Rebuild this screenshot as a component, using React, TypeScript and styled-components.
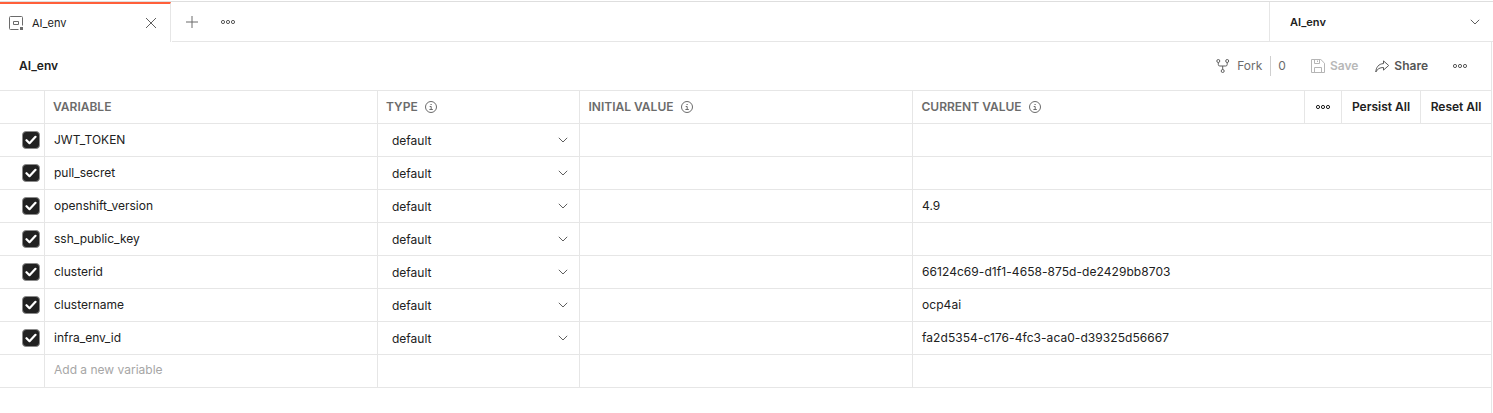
import React from "react";
import styled, { createGlobalStyle } from "styled-components";

const LINE = "#e6e6e6";

const GlobalStyle = createGlobalStyle`
  * { box-sizing: border-box; }
  body {
    margin: 0;
    background: #fff;
    color: #212121;
    font-family: Inter, "Liberation Sans", sans-serif;
    font-size: 12px;
    line-height: 16px;
  }
  svg { display: block; flex: none; }
`;

const Page = styled.div`
  display: flex;
  flex-direction: column;
  height: 413px;
  padding-top: 1px;
  overflow: hidden;
`;

const TabBar = styled.header`
  display: flex;
  flex: none;
  height: 41px;
  border-top: 1px solid #dedede;
`;

const ActiveTab = styled.div`
  display: flex;
  align-items: center;
  width: 171px;
  padding: 0 13px 0 9px;
  border-top: 2px solid #ff5f3a;
  border-right: 1px solid ${LINE};
`;

const TabName = styled.span`
  flex: 1;
  margin-left: 9px;
  font-size: 11px;
  color: #212121;
`;

const TabActions = styled.div`
  display: flex;
  flex: 1;
  align-items: center;
  gap: 22px;
  margin-left: 1px;
  padding-left: 13px;
  border-bottom: 1px solid ${LINE};
`;

const EnvironmentPicker = styled.div`
  display: flex;
  align-items: center;
  justify-content: space-between;
  width: 224px;
  padding: 1px 13px 0 20px;
  border-left: 1px solid ${LINE};
  border-bottom: 1px solid ${LINE};
  font-size: 11px;
  font-weight: 600;
`;

const Editor = styled.main`
  flex: 1;
  width: 1492px;
  border-right: 1px solid ${LINE};
`;

const Toolbar = styled.div`
  display: flex;
  align-items: center;
  height: 48px;
  padding: 0 23px 0 19px;
`;

const Title = styled.h1`
  flex: 1;
  margin: 0;
  font-size: 12px;
  font-weight: 600;
`;

const ToolButton = styled.div<{ $tone?: string; $weight?: number; $gap?: number; $after?: number }>`
  display: flex;
  align-items: center;
  gap: ${(p) => p.$gap ?? 5}px;
  margin-right: ${(p) => p.$after ?? 0}px;
  color: ${(p) => p.$tone ?? "#6b6b6b"};
  font-weight: ${(p) => p.$weight ?? 400};
`;

const ForkCount = styled.span`
  height: 20px;
  margin-right: 25px;
  padding-left: 7px;
  border-left: 1px solid #cfcfcf;
  line-height: 20px;
  color: #6b6b6b;
`;

const Row = styled.div<{ $head?: boolean }>`
  display: grid;
  grid-template-columns: 45px 333px 202px 333px 1fr;
  height: ${(p) => (p.$head ? 34 : 33)}px;
  border-top: ${(p) => (p.$head ? `1px solid ${LINE}` : "none")};
  border-bottom: 1px solid ${LINE};
`;

const Cell = styled.div<{ $inset?: number }>`
  display: flex;
  align-items: center;
  padding-left: ${(p) => p.$inset ?? 9}px;
  border-right: 1px solid ${LINE};
  white-space: nowrap;
  &:last-child { border-right: none; }
`;

const HeadCell = styled(Cell)<{ $gap?: number }>`
  gap: ${(p) => p.$gap ?? 8}px;
  color: #6b6b6b;
  font-weight: 600;
`;

const TypeCell = styled(Cell)`
  justify-content: space-between;
  padding: 2px 11px 0 14px;
`;

const ChevronSlot = styled.span`
  margin-top: -2px;
`;

const HeadActions = styled.div`
  display: flex;
  align-self: stretch;
  margin-left: auto;
`;

const HeadAction = styled.div<{ $width: number }>`
  display: flex;
  align-items: center;
  justify-content: center;
  width: ${(p) => p.$width}px;
  border-left: 1px solid ${LINE};
  color: #212121;
`;

const Checkbox = styled.span`
  display: flex;
  width: 18px;
  height: 18px;
  align-items: center;
  justify-content: center;
  border: 1px solid #8a8a8a;
  border-radius: 4px;
  background: #212121;
`;

const Value = styled.span<{ $spacing?: number }>`
  letter-spacing: ${(p) => p.$spacing ?? 0}px;
`;

const Placeholder = styled.span`
  margin-top: -2px;
  color: #a6a6a6;
`;

const Dots = ({ color = "#5a5a5a" }: { color?: string }) => (
  <svg width="16" height="6" viewBox="0 0 16 6" fill="none" stroke={color}>
    <circle cx="3" cy="3" r="1.6" />
    <circle cx="8" cy="3" r="1.6" />
    <circle cx="13" cy="3" r="1.6" />
  </svg>
);

const Chevron = () => (
  <svg width="10" height="6" viewBox="0 0 10 6" fill="none" stroke="#5f5f5f">
    <path d="M.8.8 5 5 9.2.8" />
  </svg>
);

const Info = () => (
  <svg width="12" height="12" viewBox="0 0 12 12" fill="none" stroke="#6b6b6b">
    <circle cx="6" cy="6" r="5.5" />
    <path d="M4.7 5.5H6.2V8.5M4.4 8.5H7.8" />
    <path d="M5.5 3.5h1.2" strokeWidth="1.2" />
  </svg>
);

const EnvironmentIcon = () => (
  <svg width="14" height="14" viewBox="0 0 14 14" fill="none" stroke="#6b6b6b">
    <path d="M9.5 13.5H1.5a1 1 0 0 1-1-1v-11a1 1 0 0 1 1-1h11a1 1 0 0 1 1 1v8" />
    <path d="M4.5 5.5h5v3h-5z" />
    <path d="M11 11h3v3h-3z" fill="#6b6b6b" stroke="none" />
  </svg>
);

const CloseIcon = () => (
  <svg width="12" height="12" viewBox="0 0 12 12" stroke="#5f5f5f">
    <path d="m1 1 10 10M11 1 1 11" />
  </svg>
);

const PlusIcon = () => (
  <svg width="13" height="12" viewBox="0 0 13 12" stroke="#6b6b6b">
    <path d="M1 6h12M7 0v12" />
  </svg>
);

const ForkIcon = () => (
  <svg width="14" height="14" viewBox="0 0 14 14" fill="none" stroke="#5f5f5f">
    <circle cx="2.3" cy="2" r="1.5" />
    <circle cx="11.2" cy="2" r="1.5" />
    <circle cx="6.7" cy="12" r="1.5" />
    <path d="M2.3 3.5v2A1.5 1.5 0 0 0 3.8 7h5.9a1.5 1.5 0 0 0 1.5-1.5v-2M6.7 7v3.500" />
  </svg>
);

const SaveIcon = () => (
  <svg width="14" height="14" viewBox="0 0 14 14" fill="none" stroke="#b5b5b5">
    <path d="M.5.5h9.300l3.700 3.700v9.300H.5zM3.500.5v4h5v-4M3.500 13.500v-5h7v5M6.500 1.500v1.500" />
  </svg>
);

const ShareIcon = () => (
  <svg width="15" height="13" viewBox="0 0 15 13" fill="none" stroke="#5a5a5a" strokeLinejoin="round">
    <path d="M8.5.9 13.700 5.500l-5.200 4.600V7.500C4.800 7.500 2.500 8.800.8 12 1 7.500 3.600 3.800 8.500 3.600z" />
  </svg>
);

const CheckIcon = () => (
  <svg width="12" height="10" viewBox="0 0 12 10" fill="none" stroke="#fff" strokeWidth="2.200" strokeLinecap="round" strokeLinejoin="round">
    <path d="m1.500 5.200 3 3L10.500 1.800" />
  </svg>
);

const variables = [
  { name: "JWT_TOKEN", value: "" },
  { name: "pull_secret", value: "" },
  { name: "openshift_version", value: "4.9" },
  { name: "ssh_public_key", value: "" },
  { name: "clusterid", value: "66124c69-d1f1-4658-875d-de2429bb8703" },
  { name: "clustername", value: "ocp4ai" },
  { name: "infra_env_id", value: "fa2d5354-c176-4fc3-aca0-d39325d56667" },
];

export default function App() {
  return (
    <>
      <GlobalStyle />
      <Page>
        <TabBar>
          <ActiveTab>
            <EnvironmentIcon />
            <TabName>AI_env</TabName>
            <CloseIcon />
          </ActiveTab>
          <TabActions>
            <PlusIcon />
            <Dots />
          </TabActions>
          <EnvironmentPicker>
            AI_env
            <Chevron />
          </EnvironmentPicker>
        </TabBar>
        <Editor>
          <Toolbar>
            <Title>AI_env</Title>
            <ToolButton $gap={7} $after={8}>
              <ForkIcon />
              Fork
            </ToolButton>
            <ForkCount>0</ForkCount>
            <ToolButton $tone="#b8b8b8" $weight={600} $after={17}>
              <SaveIcon />
              Save
            </ToolButton>
            <ToolButton $tone="#555" $weight={600} $gap={4} $after={24}>
              <ShareIcon />
              Share
            </ToolButton>
            <Dots />
          </Toolbar>
          <Row $head>
            <HeadCell />
            <HeadCell $inset={8}>VARIABLE</HeadCell>
            <HeadCell $inset={8} $gap={7}>
              TYPE <Info />
            </HeadCell>
            <HeadCell $inset={8.5}>
              INITIAL VALUE <Info />
            </HeadCell>
            <HeadCell $inset={8.5} $gap={7}>
              CURRENT VALUE <Info />
              <HeadActions>
                <HeadAction $width={37}>
                  <Dots color="#212121" />
                </HeadAction>
                <HeadAction $width={79}>Persist All</HeadAction>
                <HeadAction $width={71}>Reset All</HeadAction>
              </HeadActions>
            </HeadCell>
          </Row>
          {variables.map((v) => (
            <Row key={v.name}>
              <Cell $inset={22}>
                <Checkbox>
                  <CheckIcon />
                </Checkbox>
              </Cell>
              <Cell>
                <Value>{v.name}</Value>
              </Cell>
              <TypeCell>
                <Value>default</Value>
                <ChevronSlot>
                  <Chevron />
                </ChevronSlot>
              </TypeCell>
              <Cell />
              <Cell>
                <Value $spacing={0.06}>{v.value}</Value>
              </Cell>
            </Row>
          ))}
          <Row>
            <Cell />
            <Cell>
              <Placeholder>Add a new variable</Placeholder>
            </Cell>
            <Cell />
            <Cell />
            <Cell />
          </Row>
        </Editor>
      </Page>
    </>
  );
}
